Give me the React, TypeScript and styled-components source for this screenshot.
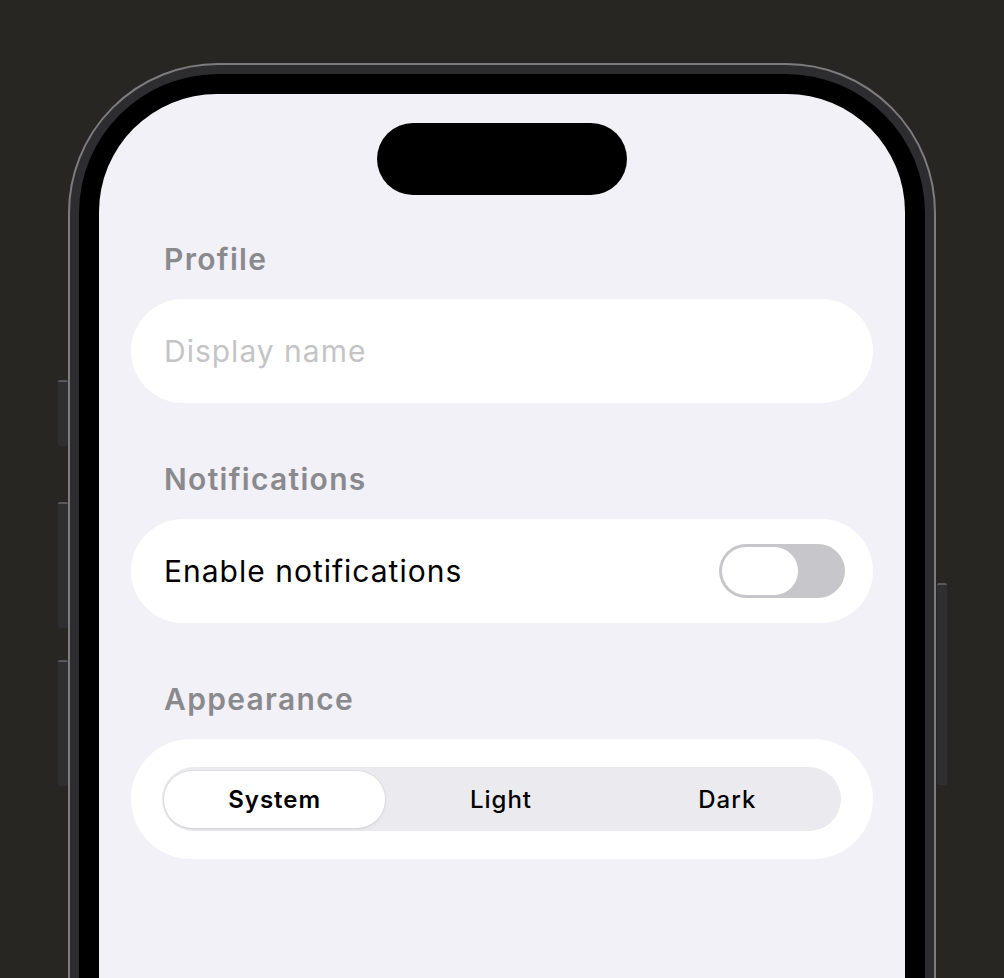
import styled, { createGlobalStyle } from "styled-components";

const GlobalStyle = createGlobalStyle`
  html, body {
    margin: 0;
    padding: 0;
    background: #282622;
  }
  body {
    font-family: Inter, "Noto Sans", "Liberation Sans", sans-serif;
    -webkit-font-smoothing: antialiased;
  }
`;

const Stage = styled.div`
  height: 978px;
  overflow: hidden;
  display: flex;
  justify-content: center;
  padding-top: 63px;
  box-sizing: border-box;
`;

const Phone = styled.div`
  position: relative;
  width: 868px;
  height: 1100px;
  box-sizing: border-box;
  border: 2px solid #7c7c7f;
  border-radius: 150px;
  background: #2d2d2f;
  padding: 9px;
`;

const SideButton = styled.div<{ $side: "left" | "right"; $top: number; $height: number }>`
  position: absolute;
  ${(p) => (p.$side === "left" ? "left: -12px;" : "right: -13px;")}
  top: ${(p) => p.$top}px;
  width: 10px;
  height: ${(p) => p.$height}px;
  background: #2f2f31;
  border-top: 2px solid #5a5a5c;
  border-radius: 2px;
  box-sizing: border-box;
`;

const Bezel = styled.div`
  height: 100%;
  box-sizing: border-box;
  background: #000;
  border-radius: 139px;
  padding: 20px;
`;

const Screen = styled.div`
  height: 100%;
  background: #f2f1f7;
  border-radius: 118px;
  padding-top: 29px;
  box-sizing: border-box;
  display: flex;
  flex-direction: column;
`;

const Island = styled.div`
  width: 250px;
  height: 72px;
  border-radius: 36px;
  background: #000;
  align-self: center;
`;

const Content = styled.div`
  padding: 46px 32px 0;
  display: flex;
  flex-direction: column;
  gap: 58px;
`;

const Section = styled.section`
  display: flex;
  flex-direction: column;
`;

const Label = styled.div`
  font-size: 30px;
  line-height: 36px;
  font-weight: 600;
  letter-spacing: 1.3px;
  color: #8a8a8e;
  padding-left: 33px;
  margin-bottom: 22px;
`;

const Card = styled.div<{ $height?: number }>`
  background: #fff;
  border-radius: 60px;
  height: ${(p) => p.$height ?? 104}px;
  box-sizing: border-box;
  display: flex;
  align-items: center;
  padding: 0 28px 0 33px;
`;

const NameInput = styled.input`
  flex: 1;
  border: none;
  outline: none;
  background: transparent;
  padding: 0;
  font-family: inherit;
  font-size: 30px;
  letter-spacing: 1px;
  color: #000;

  &::placeholder {
    color: #c4c4c7;
  }
`;

const RowText = styled.span`
  flex: 1;
  font-size: 30px;
  letter-spacing: 1px;
  color: #000;
`;

const Toggle = styled.div`
  width: 126px;
  height: 54px;
  border-radius: 27px;
  background: #c7c7cb;
  padding: 3px;
  box-sizing: border-box;
  display: flex;
`;

const Knob = styled.div`
  width: 76px;
  height: 48px;
  border-radius: 24px;
  background: #fff;
`;

const SegmentCard = styled(Card)`
  padding: 0 32px 0 31px;
`;

const Segmented = styled.div`
  flex: 1;
  height: 64px;
  border-radius: 32px;
  background: #ebebef;
  padding: 4px 0 3px;
  box-sizing: border-box;
  display: grid;
  grid-template-columns: repeat(3, 1fr);
`;

const Segment = styled.div<{ $active?: boolean }>`
  display: flex;
  align-items: center;
  justify-content: center;
  margin: 0 3px 0 2px;
  border-radius: 28px;
  font-size: 24px;
  letter-spacing: 1px;
  font-weight: ${(p) => (p.$active ? 600 : 500)};
  color: #000;
  background: ${(p) => (p.$active ? "#fff" : "transparent")};
  box-shadow: ${(p) =>
    p.$active ? "0 0 0 1px rgba(0,0,0,0.05), 0 2px 4px rgba(0,0,0,0.05)" : "none"};
`;

export default function App() {
  return (
    <>
      <GlobalStyle />
      <Stage>
        <Phone>
          <SideButton $side="left" $top={315} $height={66} />
          <SideButton $side="left" $top={437} $height={126} />
          <SideButton $side="left" $top={595} $height={126} />
          <SideButton $side="right" $top={518} $height={202} />
          <Bezel>
            <Screen>
              <Island />
              <Content>
                <Section>
                  <Label>Profile</Label>
                  <Card>
                    <NameInput placeholder="Display name" />
                  </Card>
                </Section>
                <Section>
                  <Label>Notifications</Label>
                  <Card>
                    <RowText>Enable notifications</RowText>
                    <Toggle>
                      <Knob />
                    </Toggle>
                  </Card>
                </Section>
                <Section>
                  <Label>Appearance</Label>
                  <SegmentCard $height={120}>
                    <Segmented>
                      <Segment $active>System</Segment>
                      <Segment>Light</Segment>
                      <Segment>Dark</Segment>
                    </Segmented>
                  </SegmentCard>
                </Section>
              </Content>
            </Screen>
          </Bezel>
        </Phone>
      </Stage>
    </>
  );
}
